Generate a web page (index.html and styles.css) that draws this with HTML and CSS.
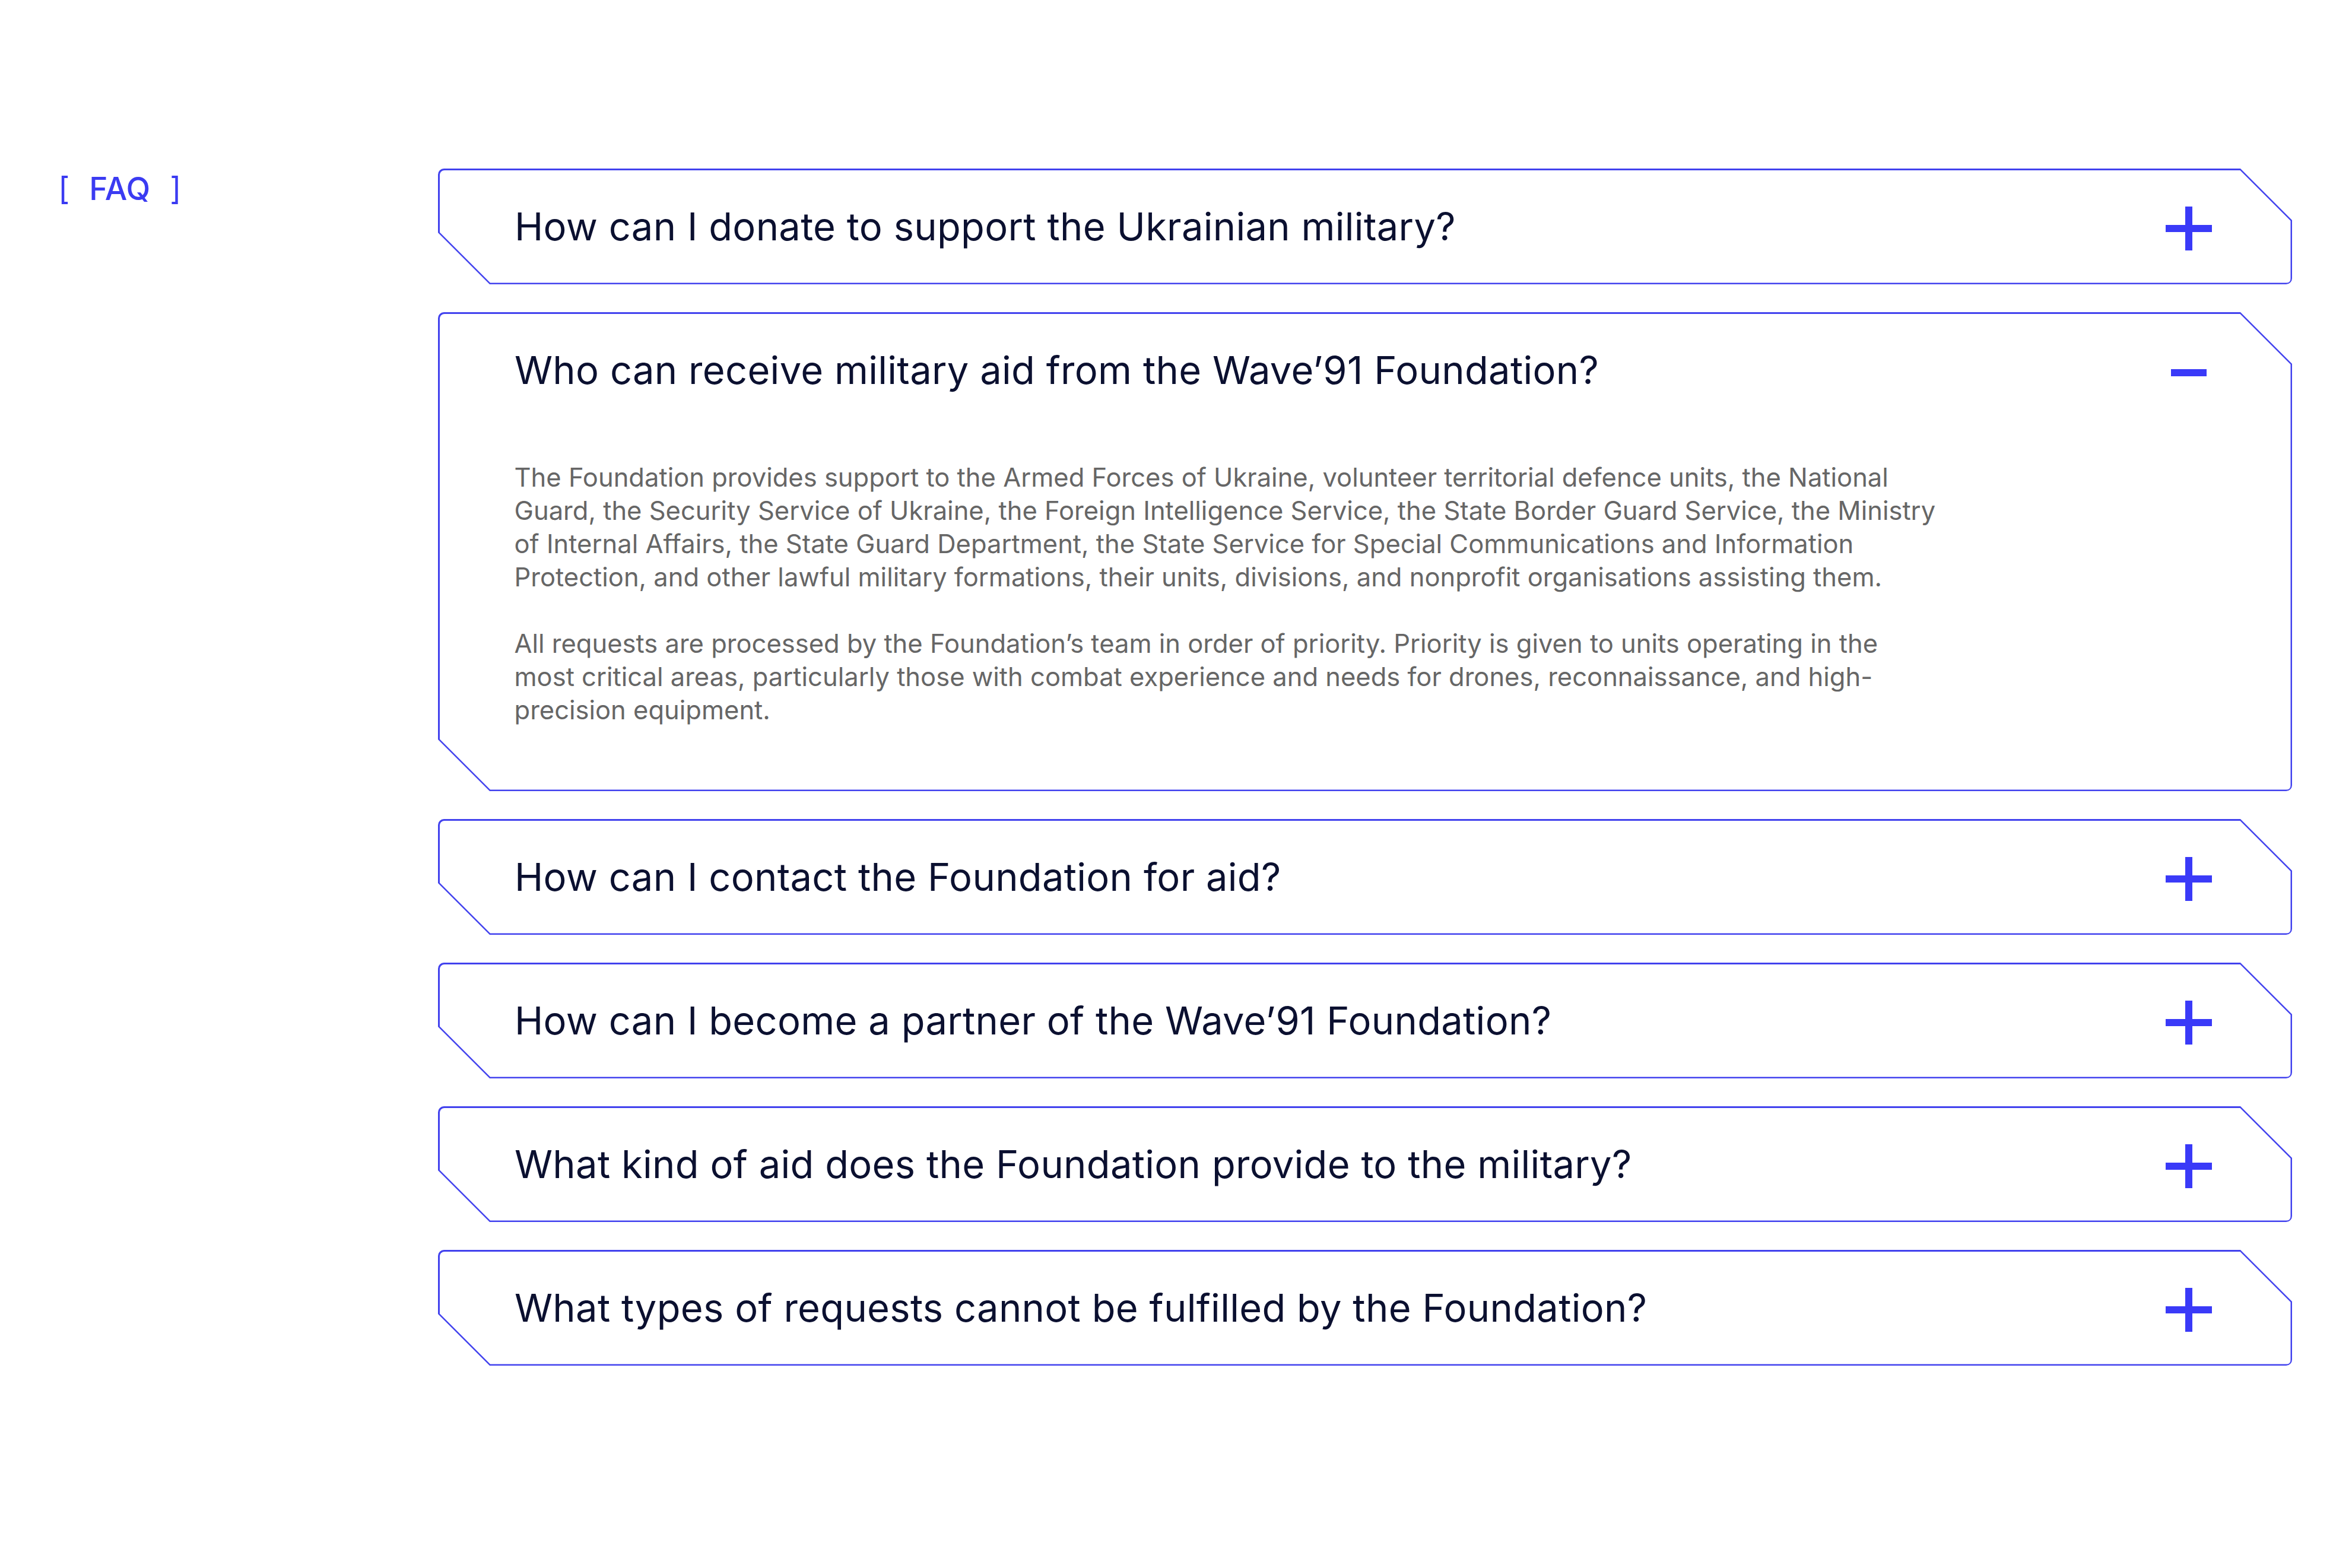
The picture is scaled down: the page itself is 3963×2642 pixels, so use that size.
FILE: index.html
```html
<!DOCTYPE html>
<html lang="en">
<head>
<meta charset="utf-8">
<title>FAQ</title>
<link rel="stylesheet" href="styles.css">
</head>
<body>
<main class="page">
  <div class="label"><span class="br">[</span><span class="label-text">FAQ</span><span class="br">]</span></div>
  <div class="list">
    <div class="card"><div class="card-inner">
      <div class="head"><h3 class="q">How can I donate to support the Ukrainian military?</h3><span class="icon"><svg width="80" height="80" viewBox="0 0 80 80"><rect x="1" y="37" width="78" height="12"/><rect x="34" y="6" width="12" height="74"/></svg></span></div>
    </div></div>
    <div class="card open"><div class="card-inner">
      <div class="head"><h3 class="q">Who can receive military aid from the Wave’91 Foundation?</h3><span class="icon"><svg width="80" height="80" viewBox="0 0 80 80"><rect x="10" y="38" width="60" height="12"/></svg></span></div>
      <div class="answer">
        <p>The Foundation provides support to the Armed Forces of Ukraine, volunteer territorial defence units, the National Guard, the Security Service of Ukraine, the Foreign Intelligence Service, the State Border Guard Service, the Ministry of Internal Affairs, the State Guard Department, the State Service for Special Communications and Information Protection, and other lawful military formations, their units, divisions, and nonprofit organisations assisting them.</p>
        <p>All requests are processed by the Foundation’s team in order of priority. Priority is given to units operating in the most critical areas, particularly those with combat experience and needs for drones, reconnaissance, and high-precision equipment.</p>
      </div>
    </div></div>
    <div class="card"><div class="card-inner">
      <div class="head"><h3 class="q">How can I contact the Foundation for aid?</h3><span class="icon"><svg width="80" height="80" viewBox="0 0 80 80"><rect x="1" y="37" width="78" height="12"/><rect x="34" y="6" width="12" height="74"/></svg></span></div>
    </div></div>
    <div class="card"><div class="card-inner">
      <div class="head"><h3 class="q">How can I become a partner of the Wave’91 Foundation?</h3><span class="icon"><svg width="80" height="80" viewBox="0 0 80 80"><rect x="1" y="37" width="78" height="12"/><rect x="34" y="6" width="12" height="74"/></svg></span></div>
    </div></div>
    <div class="card"><div class="card-inner">
      <div class="head"><h3 class="q">What kind of aid does the Foundation provide to the military?</h3><span class="icon"><svg width="80" height="80" viewBox="0 0 80 80"><rect x="1" y="37" width="78" height="12"/><rect x="34" y="6" width="12" height="74"/></svg></span></div>
    </div></div>
    <div class="card"><div class="card-inner">
      <div class="head"><h3 class="q">What types of requests cannot be fulfilled by the Foundation?</h3><span class="icon"><svg width="80" height="80" viewBox="0 0 80 80"><rect x="1" y="37" width="78" height="12"/><rect x="34" y="6" width="12" height="74"/></svg></span></div>
    </div></div>
  </div>
</main>
</body>
</html>
```
FILE: styles.css
```css
html, body {
  margin: 0;
  padding: 0;
  background: #ffffff;
}
body {
  font-family: Inter, "Liberation Sans", sans-serif;
  color: #0b1030;
}
.page {
  display: grid;
  grid-template-columns: 640px 1fr;
  padding: 284px 101px 0 98px;
  min-height: 2642px;
  box-sizing: border-box;
}
.label {
  display: flex;
  align-items: flex-start;
  gap: 33px;
  padding-top: 3px;
  color: #3b3bf2;
  font-size: 53px;
  line-height: 62px;
  font-weight: 500;
}
.label .br {
  font-weight: 400;
}
.list {
  display: flex;
  flex-direction: column;
  gap: 47px;
}
.card {
  background: #4242ee;
  border-radius: 10px;
  padding: 2.5px;
  clip-path: polygon(0 0, calc(100% - 87px) 0, 100% 87px, 100% 100%, 87px 100%, 0 calc(100% - 87px));
}
.card-inner {
  background: #ffffff;
  border-radius: 8px;
  clip-path: polygon(0 0, calc(100% - 85.5px) 0, 100% 85.5px, 100% 100%, 85.5px 100%, 0 calc(100% - 85.5px));
}
.head {
  height: 190px;
  display: flex;
  align-items: center;
  justify-content: space-between;
  padding: 0 131.5px 0 126.5px;
}
.q {
  margin: 0;
  font-size: 65px;
  font-weight: 400;
  letter-spacing: 0.3px;
  color: #0b1030;
}
.icon {
  display: flex;
  width: 80px;
  height: 80px;
}
.icon svg {
  fill: #3a3af8;
}
.answer {
  padding: 57px 0 107px 126px;
  width: 2402px;
  color: #666666;
  font-size: 43.5px;
  line-height: 56px;
}
.answer p {
  margin: 0 0 56px;
}
.answer p:last-child {
  margin-bottom: 0;
}
```
